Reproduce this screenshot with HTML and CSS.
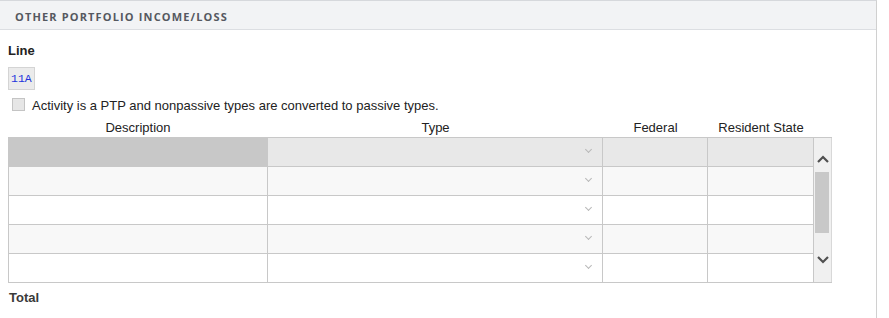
FILE: index.html
```html
<!DOCTYPE html>
<html lang="en">

<head>
    <meta charset="UTF-8">
    <title>Other Portfolio Income/Loss</title>
    <link rel="stylesheet" href="styles.css">
</head>

<body>
    <div class="panel">
        <div class="panel-header">OTHER PORTFOLIO INCOME/LOSS</div>
        <div class="panel-body">
            <div class="field-label">Line</div>
            <div class="line-code">11A</div>
            <label class="ptp-check">
                <span class="checkbox"></span>
                Activity is a PTP and nonpassive types are converted to passive types.
            </label>

            <div class="col-heads">
                <div class="c-desc">Description</div>
                <div class="c-type">Type</div>
                <div class="c-fed">Federal</div>
                <div class="c-state">Resident State</div>
            </div>
            <div class="grid-wrap">
                <div class="grid">
                    <div class="row row-active">
                        <div class="cell c-desc selected"></div>
                        <div class="cell c-type"><span class="chev"></span></div>
                        <div class="cell c-fed"></div>
                        <div class="cell c-state"></div>
                    </div>
                    <div class="row row-alt">
                        <div class="cell c-desc"></div>
                        <div class="cell c-type"><span class="chev"></span></div>
                        <div class="cell c-fed"></div>
                        <div class="cell c-state"></div>
                    </div>
                    <div class="row">
                        <div class="cell c-desc"></div>
                        <div class="cell c-type"><span class="chev"></span></div>
                        <div class="cell c-fed"></div>
                        <div class="cell c-state"></div>
                    </div>
                    <div class="row row-alt">
                        <div class="cell c-desc"></div>
                        <div class="cell c-type"><span class="chev"></span></div>
                        <div class="cell c-fed"></div>
                        <div class="cell c-state"></div>
                    </div>
                    <div class="row">
                        <div class="cell c-desc"></div>
                        <div class="cell c-type"><span class="chev"></span></div>
                        <div class="cell c-fed"></div>
                        <div class="cell c-state"></div>
                    </div>
                </div>
                <div class="scrollbar">
                    <svg class="arrow" width="14" height="8" viewBox="0 0 14 8">
                        <path d="M2 7 L7 2 L12 7" fill="none" stroke="#505050" stroke-width="2.2"/>
                    </svg>
                    <div class="thumb"></div>
                    <svg class="arrow arrow-down" width="14" height="8" viewBox="0 0 14 8">
                        <path d="M2 1 L7 6 L12 1" fill="none" stroke="#505050" stroke-width="2.2"/>
                    </svg>
                </div>
            </div>
            <div class="total">Total</div>
        </div>
    </div>
</body>

</html>
```

FILE: styles.css
```css
body {
    margin: 0;
    font-family: "Liberation Sans", Arial, sans-serif;
    background: #fff;
    color: #222;
}

.panel {
    width: 877px;
    height: 330px;
    border-top: 1px solid #d6d8dc;
    border-right: 1px solid #d0d0d0;
    box-sizing: border-box;
}

.panel-header {
    height: 29px;
    box-sizing: border-box;
    padding: 8px 0 0 15px;
    background: #f2f3f5;
    border-bottom: 1px solid #dcdee2;
    font-family: "Open Sans", sans-serif;
    font-size: 11px;
    font-weight: 700;
    letter-spacing: 1.15px;
    color: #555860;
}

.panel-body {
    padding: 14px 0 0 8px;
}

.field-label {
    font-size: 13px;
    font-weight: 700;
    color: #222;
    line-height: 14px;
}

.line-code {
    display: block;
    margin-top: 9px;
    width: 27px;
    height: 23px;
    box-sizing: border-box;
    padding-top: 4px;
    padding-left: 2px;
    background: #ebebeb;
    border: 1px solid #d4d4d4;
    font-family: "Liberation Mono", "Courier New", monospace;
    font-size: 11.5px;
    color: #2233dd;
}

.ptp-check {
    display: flex;
    align-items: center;
    margin-top: 7px;
    padding-left: 4px;
    font-size: 13px;
    color: #222;
    height: 16px;
}

.checkbox {
    width: 11px;
    height: 11px;
    margin-right: 7px;
    margin-top: -2px;
    background: #e6e6e6;
    border: 1px solid #c4c4c4;
}

.col-heads {
    display: flex;
    height: 14px;
    margin-top: 8px;
    margin-bottom: 2px;
    font-size: 13px;
    color: #222;
    text-align: center;
    line-height: 14px;
}

.c-desc { width: 260px; }
.c-type { width: 335px; }
.c-fed { width: 105px; }
.c-state { width: 106px; }

.grid-wrap {
    display: flex;
    width: 824px;
    height: 146px;
    border: 1px solid #c8c8c8;
    border-right: none;
    box-sizing: border-box;
}

.grid {
    display: flex;
    flex-direction: column;
}

.row {
    display: flex;
    height: 29px;
    box-sizing: border-box;
    border-bottom: 1px solid #c8c8c8;
    background: #fff;
}

.row:last-child {
    border-bottom: none;
    height: 28px;
}

.row-alt {
    background: #f8f8f8;
}

.row-active {
    background: #e8e8e8;
}

.cell {
    box-sizing: border-box;
    border-right: 1px solid #c8c8c8;
    position: relative;
}

.c-desc.cell { width: 259px; }

.cell.selected {
    background: #c8c8c8;
}

.chev {
    position: absolute;
    right: 11px;
    top: 9px;
    width: 4px;
    height: 4px;
    border-right: 1px solid #b8b8b8;
    border-bottom: 1px solid #b8b8b8;
    transform: rotate(45deg);
}

.scrollbar {
    display: flex;
    flex-direction: column;
    align-items: center;
    width: 18px;
    padding-top: 17px;
    background: #f0f0f0;
    border-right: 1px solid #d8d8d8;
    box-sizing: border-box;
}

.arrow {
    flex: none;
}

.thumb {
    width: 14px;
    height: 61px;
    margin-top: 9px;
    margin-left: -1px;
    background: #c8c8c8;
}

.arrow-down {
    margin-top: 23px;
}

.total {
    margin-top: 7px;
    font-size: 13px;
    font-weight: 700;
    color: #3a3a3a;
    padding-left: 1px;
}
```
